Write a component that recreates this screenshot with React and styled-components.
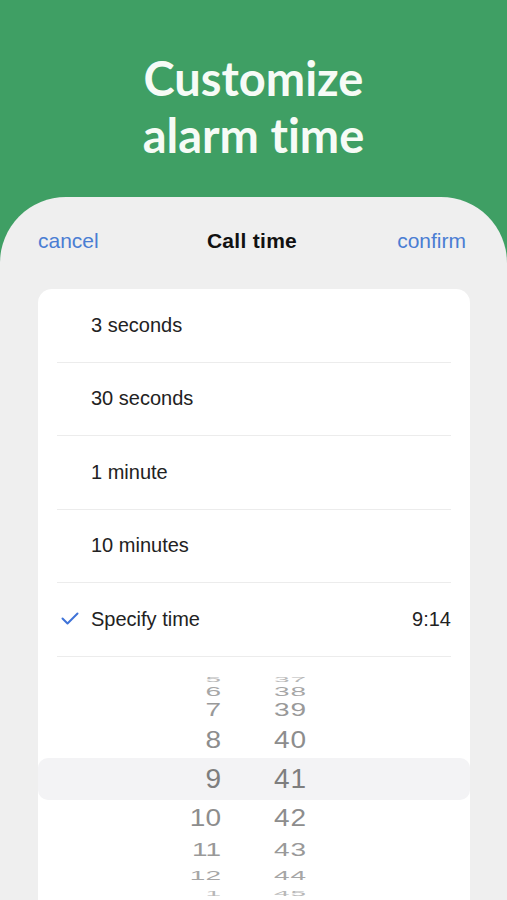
import React from 'react';
import styled, { createGlobalStyle } from 'styled-components';

const GlobalStyle = createGlobalStyle`
  html, body {
    margin: 0;
    padding: 0;
  }
  body {
    background: #3f9f64;
    font-family: "Liberation Sans", Arial, sans-serif;
  }
`;

const Page = styled.div`
  width: 507px;
  height: 900px;
  overflow: hidden;
  display: flex;
  flex-direction: column;
  background: #3f9f64;
`;

const Hero = styled.header`
  height: 197px;
  flex: none;
  display: flex;
  align-items: center;
  justify-content: center;
  padding-top: 16px;
  box-sizing: border-box;
`;

const Title = styled.h1`
  margin: 0;
  font-family: Lato, "Open Sans", sans-serif;
  font-weight: 700;
  font-size: 47px;
  line-height: 57px;
  color: #f6fbf6;
  text-align: center;
  font-variant-ligatures: none;
`;

const Sheet = styled.section`
  flex: 1;
  display: flex;
  flex-direction: column;
  background: #efefef;
  border-radius: 66px 66px 0 0;
`;

const SheetHeader = styled.div`
  height: 88px;
  flex: none;
  display: grid;
  grid-template-columns: 1fr auto 1fr;
  align-items: center;
  padding: 0 41px 0 38px;
  font-size: 21px;
`;

const TextButton = styled.span`
  color: #4a7dd3;
  justify-self: ${(p) => (p.$end ? 'end' : 'start')};
`;

const SheetTitle = styled.span`
  color: #111;
  font-weight: 700;
  letter-spacing: 0.3px;
`;

const Card = styled.div`
  flex: 1;
  margin: 4px 37px 0 38px;
  background: #fff;
  border-radius: 14px 14px 0 0;
  display: flex;
  flex-direction: column;
`;

const Option = styled.div`
  height: 73.5px;
  box-sizing: border-box;
  margin: 0 19px;
  border-bottom: 1px solid #ececec;
  display: flex;
  align-items: center;
  font-size: 20px;
  color: #222;
`;

const CheckSlot = styled.span`
  width: 34px;
  flex: none;
  display: flex;
  align-items: center;
  padding-left: 4px;
  box-sizing: border-box;
`;

const OptionLabel = styled.span`
  flex: 1;
`;

const OptionValue = styled.span`
  font-size: 20px;
  color: #222;
`;

const Wheel = styled.div`
  padding-top: 9px;
  display: flex;
  flex-direction: column;
`;

const WheelRow = styled.div`
  height: ${(p) => p.$h}px;
  display: grid;
  grid-template-columns: 183px 1fr;
  column-gap: 53px;
  align-items: center;
  border-radius: 10px;
  background: ${(p) => (p.$selected ? '#f3f3f5' : 'transparent')};
  color: ${(p) => p.$tone};
  font-size: 28px;
  line-height: 1;
`;

const HourCell = styled.span`
  justify-self: end;
  display: inline-block;
  transform: scaleY(${(p) => p.$scale});
`;

const MinuteCell = styled.span`
  justify-self: start;
  display: inline-block;
  letter-spacing: 1px;
  transform: scaleY(${(p) => p.$scale});
`;

const Check = () => (
  <svg width="18" height="14" viewBox="0 0 18 14" fill="none">
    <path d="M1.5 6.5 L6.5 11.5 L16.5 1.5" stroke="#3f73d8" strokeWidth="2" strokeLinecap="round" strokeLinejoin="round" />
  </svg>
);

const options = [
  { label: '3 seconds' },
  { label: '30 seconds' },
  { label: '1 minute' },
  { label: '10 minutes' },
  { label: 'Specify time', value: '9:14', checked: true },
];

const wheel = [
  { h: '5', m: '37', height: 12, scale: 0.25, tone: '#b8b8b8' },
  { h: '6', m: '38', height: 18, scale: 0.45, tone: '#a6a6a6' },
  { h: '7', m: '39', height: 26, scale: 0.68, tone: '#999' },
  { h: '8', m: '40', height: 36, scale: 0.88, tone: '#8d8d8d' },
  { h: '9', m: '41', height: 42, scale: 1, tone: '#7e7e7e', selected: true },
  { h: '10', m: '42', height: 36, scale: 0.88, tone: '#8d8d8d' },
  { h: '11', m: '43', height: 26, scale: 0.68, tone: '#999' },
  { h: '12', m: '44', height: 18, scale: 0.45, tone: '#a6a6a6' },
  { h: '1', m: '45', height: 12, scale: 0.25, tone: '#b8b8b8' },
];

export default function App() {
  return (
    <>
      <GlobalStyle />
      <Page>
        <Hero>
          <Title>
            Customize
            <br />
            alarm time
          </Title>
        </Hero>
        <Sheet>
          <SheetHeader>
            <TextButton>cancel</TextButton>
            <SheetTitle>Call time</SheetTitle>
            <TextButton $end>confirm</TextButton>
          </SheetHeader>
          <Card>
            {options.map((o) => (
              <Option key={o.label}>
                <CheckSlot>{o.checked && <Check />}</CheckSlot>
                <OptionLabel>{o.label}</OptionLabel>
                {o.value && <OptionValue>{o.value}</OptionValue>}
              </Option>
            ))}
            <Wheel>
              {wheel.map((r) => (
                <WheelRow key={r.h} $h={r.height} $tone={r.tone} $selected={r.selected}>
                  <HourCell $scale={r.scale}>{r.h}</HourCell>
                  <MinuteCell $scale={r.scale}>{r.m}</MinuteCell>
                </WheelRow>
              ))}
            </Wheel>
          </Card>
        </Sheet>
      </Page>
    </>
  );
}
